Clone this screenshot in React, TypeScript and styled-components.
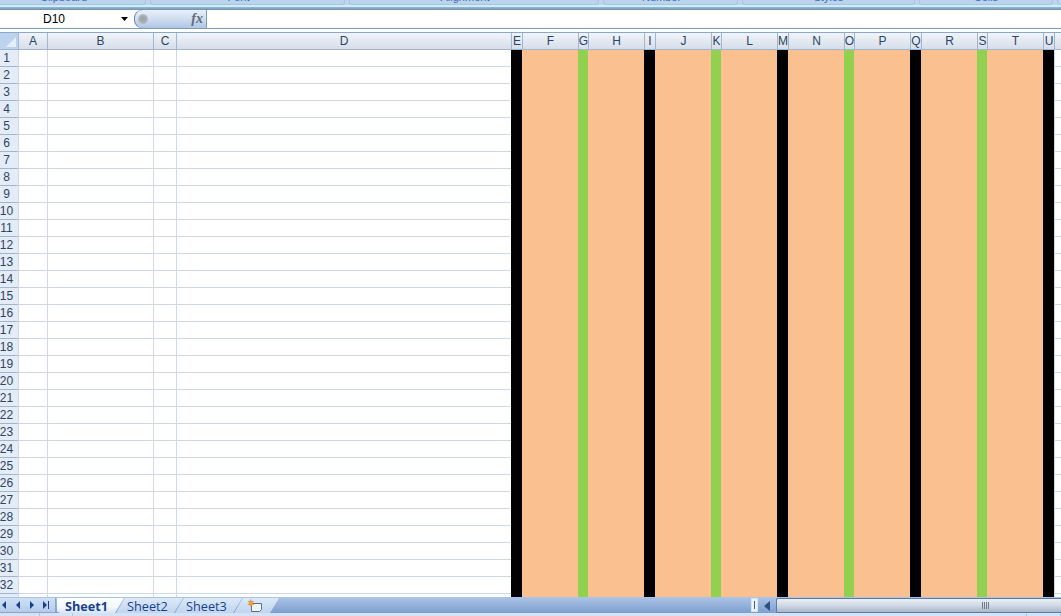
import React from "react";
import styled, { createGlobalStyle } from "styled-components";

const Global = createGlobalStyle`
  html, body { margin: 0; padding: 0; width: 1061px; height: 616px; overflow: hidden; background: #fff; }
  * { box-sizing: border-box; }
`;

const Page = styled.div`
  width: 1061px;
  height: 616px;
  display: flex;
  flex-direction: column;
  overflow: hidden;
  font-family: "Liberation Sans", Arial, sans-serif;
  background: #fff;
`;

/* ---------- ribbon remains ---------- */
const Ribbon = styled.div`
  height: 10px;
  flex: none;
  display: flex;
  flex-direction: column;
  background: #bfd5ee;
`;
const GroupRow = styled.div`
  height: 5px;
  flex: none;
  display: flex;
  gap: 4px;
`;
const Group = styled.div<{ $w: number; $cut?: boolean; $launcher?: boolean }>`
  flex: none;
  width: ${(p) => p.$w}px;
  height: 5px;
  display: flex;
  justify-content: center;
  align-items: flex-end;
  overflow: hidden;
  padding-right: ${(p) => (p.$launcher ? 18 : 0)}px;
  background: #bcd3ee;
  border: 1px solid #a9c3e2;
  border-top: none;
  border-radius: 0 0 3px 3px;
  ${(p) => (p.$cut ? "border-left: none; border-radius: 0 0 3px 0;" : "")}
`;
const GroupLabel = styled.span`
  font-size: 11px;
  line-height: 13px;
  color: #3f68b4;
  white-space: nowrap;
`;
const RibbonGlow = styled.div`
  height: 2px;
  flex: none;
  background: #c9f0f8;
`;
const RibbonEdge = styled.div`
  height: 3px;
  flex: none;
  background: linear-gradient(#9ab8d6, #6f8fb0);
`;

/* ---------- formula bar ---------- */
const FormulaBar = styled.div`
  height: 19px;
  flex: none;
  display: flex;
  background: #fff;
  border-bottom: 1px solid #7d9dbb;
`;
const NameBox = styled.div`
  width: 134px;
  flex: none;
  display: flex;
  align-items: center;
  justify-content: space-between;
  padding: 0 4px 0 43px;
  font-size: 12px;
  color: #000;
`;
const Caret = styled.svg`
  width: 7px;
  height: 4px;
  margin-right: 2px;
  display: block;
`;
const FxPill = styled.div`
  width: 73px;
  flex: none;
  height: 18px;
  display: flex;
  align-items: center;
  justify-content: space-between;
  padding: 0 3px 0 4px;
  border-right: 1px solid #7d9dbb;
  border-radius: 8px 0 0 8px;
  background: linear-gradient(#e9eff8 0%, #d3dff0 45%, #aec6e6 100%);
  box-shadow: inset 1px 0 0 #6d8db6;
`;
const Knob = styled.div`
  width: 10px;
  height: 11px;
  border-radius: 50%;
  background: radial-gradient(circle at 50% 45%, #9a9fa7 0%, #a8aeb7 45%, #cfd6e1 80%, #e4eaf3 100%);
`;
const Fx = styled.span`
  font-family: "Liberation Serif", "Times New Roman", serif;
  font-style: italic;
  font-weight: bold;
  font-size: 14px;
  color: #5f6b7c;
`;
const Spacer = styled.div`
  height: 3px;
  flex: none;
  background: #fff;
`;

/* ---------- sheet ---------- */
const Sheet = styled.div`
  flex: 1;
  min-height: 0;
  display: grid;
  grid-template-columns: 18px 29px 106px 23px 335px 11px 56px 10px 56px 11px 56px 10px 56px 11px 56px 10px 56px 11px 56px 10px 56px 11px 7px;
  grid-template-rows: 17px;
  grid-auto-rows: 17px;
  overflow: hidden;
  border-top: 1px solid #8ca8c6;
`;
const Corner = styled.div`
  position: relative;
  background: #bcd2ee;
  border-bottom: 1px solid #9eb6ce;
  &::after {
    content: "";
    position: absolute;
    right: 2px;
    bottom: 2px;
    border-style: solid;
    border-width: 0 0 10px 10px;
    border-color: transparent transparent #e4edf8 transparent;
  }
`;
const ColHead = styled.div`
  display: flex;
  align-items: center;
  justify-content: center;
  font-size: 12px;
  color: #2c4566;
  background: linear-gradient(#f1f4f9, #d6deea);
  border-left: 1px solid #9eb6ce;
  border-bottom: 1px solid #9eb6ce;
`;
const RowHead = styled.div`
  display: flex;
  align-items: center;
  justify-content: center;
  padding-right: 5px;
  font-size: 12px;
  color: #2c4566;
  background: #e4ecf7;
  border-bottom: 1px solid #9eb6ce;
`;
const Cell = styled.div<{ $fill: string | null }>`
  background: ${(p) => p.$fill ?? "#fff"};
  ${(p) =>
    p.$fill
      ? ""
      : "border-left: 1px solid #d0d7e5; border-bottom: 1px solid #d0d7e5;"}
`;

/* ---------- bottom bar ---------- */
const TabBar = styled.div`
  height: 16px;
  flex: none;
  display: flex;
  align-items: stretch;
  background: linear-gradient(#a9c3e6, #7d9ecd);
  border-top: 1px solid #a8c4e8;
`;
const Nav = styled.div`
  width: 56px;
  flex: none;
  display: flex;
  align-items: center;
  justify-content: space-between;
  padding: 0 5px 0 0;
  background: linear-gradient(#cfe0f6, #b4cceb);
  border-right: 1px solid #8ba6cc;
  border-bottom: 1px solid #8ba6cc;
`;
const NavIcon = styled.svg`
  width: 8px;
  height: 8px;
  display: block;
  fill: #17408b;
`;
const Tabs = styled.div`
  display: flex;
  flex: none;
  width: 695px;
  padding-left: 1px;
`;
const Tab = styled.div<{ $active?: boolean; $w: number }>`
  flex: none;
  width: ${(p) => p.$w}px;
  margin-right: -8px;
  display: flex;
  align-items: center;
  justify-content: center;
  padding-right: ${(p) => (p.$active ? 8 : 4)}px;
  font-family: "Open Sans", "DejaVu Sans", sans-serif;
  font-size: 12.7px;
  font-weight: ${(p) => (p.$active ? 700 : 400)};
  color: #15428b;
  z-index: ${(p) => (p.$active ? 3 : 1)};
  background: ${(p) =>
    p.$active
      ? "linear-gradient(#fff 0%, #f4f8fd 60%, #d6e4f6 100%)"
      : "linear-gradient(#dde9f8, #c0d5ef)"};
  clip-path: ${(p) =>
    p.$active
      ? "polygon(0 0, 100% 0, calc(100% - 9px) 100%, 3px 100%, 0 90%)"
      : "polygon(9px 0, 100% 0, calc(100% - 9px) 100%, 0 100%)"};
`;
const NewTab = styled(Tab)`
  padding: 0 3px 0 0;
`;
const NewSheet = styled.svg`
  width: 16px;
  height: 13px;
  display: block;
`;
const Scroller = styled.div`
  flex: 1;
  display: flex;
  align-items: stretch;
`;
const Splitter = styled.div`
  width: 7px;
  flex: none;
  margin: 0 0 1px;
  display: flex;
  align-items: center;
  justify-content: center;
  background: #eef4fc;
  border: 1px solid #d8e5f5;
`;
const SplitMark = styled.div`
  width: 1px;
  height: 8px;
  background: #3d5f96;
`;
const ArrowCell = styled.div`
  width: 18px;
  flex: none;
  display: flex;
  align-items: center;
  justify-content: center;
`;
const LeftArrow = styled.svg`
  width: 6px;
  height: 10px;
  display: block;
  fill: #2f4f80;
`;
const Track = styled.div`
  flex: 1;
  display: flex;
  align-items: center;
  justify-content: center;
  gap: 1px;
  padding-left: 132px;
  background: linear-gradient(#eaeef4 0%, #d5dce7 45%, #a9b6ca 100%);
  border: 1px solid #5b7aa8;
  border-right: none;
  border-radius: 2px 0 0 2px;
`;
const Grip = styled.div`
  width: 1px;
  height: 7px;
  background: #6f7c90;
`;
const StatusEdge = styled.div`
  height: 3px;
  flex: none;
  display: flex;
  background: #d3e2f4;
`;
const StatusPane = styled.div<{ $w?: number }>`
  flex: ${(p) => (p.$w ? "none" : "1")};
  width: ${(p) => (p.$w ? `${p.$w}px` : "auto")};
  border-right: 1px solid #b3c6df;
`;

const widths = [29, 106, 23, 335, 11, 56, 10, 56, 11, 56, 10, 56, 11, 56, 10, 56, 11, 56, 10, 56, 11, 7];
const letters = "ABCDEFGHIJKLMNOPQRSTUV".split("");
const BLACK = "#000";
const GREEN = "#92d050";
const PEACH = "#fac090";

const fillFor = (index: number): string | null => {
  if (index < 4 || index === 21) return null;
  const k = (index - 4) % 4;
  if (k === 0) return BLACK;
  if (k === 2) return GREEN;
  return PEACH;
};

const rows = Array.from({ length: 33 }, (_, i) => i + 1);

const groups = [
  { w: 146, label: "Clipboard", cut: true, launcher: true },
  { w: 195, label: "Font", launcher: true },
  { w: 250, label: "Alignment", launcher: true },
  { w: 135, label: "Number", launcher: true },
  { w: 173, label: "Styles" },
  { w: 134, label: "Cells" },
  { w: 8, label: "" },
];

export default function App() {
  return (
    <Page>
      <Global />
      <Ribbon>
        <GroupRow>
          {groups.map((g) => (
            <Group key={g.w} $w={g.w} $cut={g.cut} $launcher={g.launcher}>
              <GroupLabel>{g.label}</GroupLabel>
            </Group>
          ))}
        </GroupRow>
        <RibbonGlow />
        <RibbonEdge />
      </Ribbon>
      <FormulaBar>
        <NameBox>
          <span>D10</span>
          <Caret viewBox="0 0 7 4">
            <path d="M0 0h7L3.500 4z" fill="#000" />
          </Caret>
        </NameBox>
        <FxPill>
          <Knob />
          <Fx>fx</Fx>
        </FxPill>
      </FormulaBar>
      <Spacer />
      <Sheet>
        <Corner />
        {letters.map((l, i) => (
          <ColHead key={l}>{i === 21 ? "" : l}</ColHead>
        ))}
        {rows.map((r) => (
          <React.Fragment key={r}>
            <RowHead>{r}</RowHead>
            {widths.map((_, c) => (
              <Cell key={c} $fill={fillFor(c)} />
            ))}
          </React.Fragment>
        ))}
      </Sheet>
      <TabBar>
        <Nav>
          <NavIcon viewBox="0 0 8 8"><path d="M6 0v8L2 4z" /></NavIcon>
          <NavIcon viewBox="0 0 8 8"><path d="M6 0v8L2 4z" /></NavIcon>
          <NavIcon viewBox="0 0 8 8"><path d="M2 0v8l4-4z" /></NavIcon>
          <NavIcon viewBox="0 0 8 8"><path d="M1 0v8l4-4zM6 0h1v8H6z" /></NavIcon>
        </Nav>
        <Tabs>
          <Tab $active $w={67}>Sheet1</Tab>
          <Tab $w={67}>Sheet2</Tab>
          <Tab $w={67}>Sheet3</Tab>
          <NewTab $w={45}>
            <NewSheet viewBox="0 0 16 13">
              <path d="M4.500 4.500h10v6l-2 2h-8z" fill="#eef3fa" stroke="#5f6f86" />
              <path d="M3.500 0.500l1 2 2-.5-1 2 1.500 1.500-2 .2-1 2-1-2-2-.2 1.500-1.500-1-2 2 .5z" fill="#f2a52c" stroke="#c9761a" strokeWidth="0.4" />
            </NewSheet>
          </NewTab>
        </Tabs>
        <Scroller>
          <Splitter><SplitMark /></Splitter>
          <ArrowCell>
            <LeftArrow viewBox="0 0 6 10"><path d="M6 0v10L0 5z" /></LeftArrow>
          </ArrowCell>
          <Track>
            <Grip /><Grip /><Grip /><Grip />
          </Track>
        </Scroller>
      </TabBar>
      <StatusEdge>
        <StatusPane $w={40} />
        <StatusPane $w={33} />
        <StatusPane $w={954} />
        <StatusPane />
      </StatusEdge>
    </Page>
  );
}
